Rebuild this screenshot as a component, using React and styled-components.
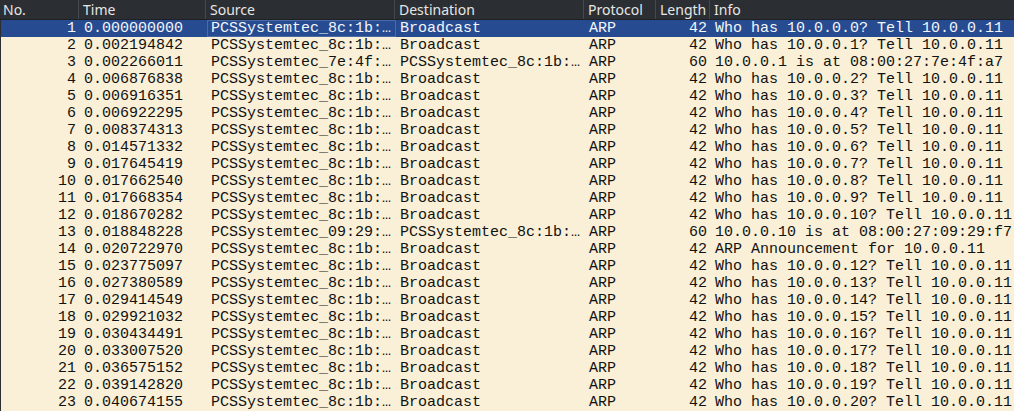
import styled, { createGlobalStyle } from "styled-components";

const GlobalStyle = createGlobalStyle`
	html, body {
		margin: 0;
		padding: 0;
		background: #faf0d7;
		overflow: hidden;
	}
`;

const A = "PCSSystemtec_8c:1b:…";

const packets = [
	[1, "0.000000000", A, "Broadcast", 42, "Who has 10.0.0.0? Tell 10.0.0.11"],
	[2, "0.002194842", A, "Broadcast", 42, "Who has 10.0.0.1? Tell 10.0.0.11"],
	[3, "0.002266011", "PCSSystemtec_7e:4f:…", A, 60, "10.0.0.1 is at 08:00:27:7e:4f:a7"],
	[4, "0.006876838", A, "Broadcast", 42, "Who has 10.0.0.2? Tell 10.0.0.11"],
	[5, "0.006916351", A, "Broadcast", 42, "Who has 10.0.0.3? Tell 10.0.0.11"],
	[6, "0.006922295", A, "Broadcast", 42, "Who has 10.0.0.4? Tell 10.0.0.11"],
	[7, "0.008374313", A, "Broadcast", 42, "Who has 10.0.0.5? Tell 10.0.0.11"],
	[8, "0.014571332", A, "Broadcast", 42, "Who has 10.0.0.6? Tell 10.0.0.11"],
	[9, "0.017645419", A, "Broadcast", 42, "Who has 10.0.0.7? Tell 10.0.0.11"],
	[10, "0.017662540", A, "Broadcast", 42, "Who has 10.0.0.8? Tell 10.0.0.11"],
	[11, "0.017668354", A, "Broadcast", 42, "Who has 10.0.0.9? Tell 10.0.0.11"],
	[12, "0.018670282", A, "Broadcast", 42, "Who has 10.0.0.10? Tell 10.0.0.11"],
	[13, "0.018848228", "PCSSystemtec_09:29:…", A, 60, "10.0.0.10 is at 08:00:27:09:29:f7"],
	[14, "0.020722970", A, "Broadcast", 42, "ARP Announcement for 10.0.0.11"],
	[15, "0.023775097", A, "Broadcast", 42, "Who has 10.0.0.12? Tell 10.0.0.11"],
	[16, "0.027380589", A, "Broadcast", 42, "Who has 10.0.0.13? Tell 10.0.0.11"],
	[17, "0.029414549", A, "Broadcast", 42, "Who has 10.0.0.14? Tell 10.0.0.11"],
	[18, "0.029921032", A, "Broadcast", 42, "Who has 10.0.0.15? Tell 10.0.0.11"],
	[19, "0.030434491", A, "Broadcast", 42, "Who has 10.0.0.16? Tell 10.0.0.11"],
	[20, "0.033007520", A, "Broadcast", 42, "Who has 10.0.0.17? Tell 10.0.0.11"],
	[21, "0.036575152", A, "Broadcast", 42, "Who has 10.0.0.18? Tell 10.0.0.11"],
	[22, "0.039142820", A, "Broadcast", 42, "Who has 10.0.0.19? Tell 10.0.0.11"],
	[23, "0.040674155", A, "Broadcast", 42, "Who has 10.0.0.20? Tell 10.0.0.11"],
];

const COLS = "79px 127px 189px 189px 72px 54px 1fr";

function App() {
	return (
		<>
			<GlobalStyle />
			<Table>
				<HeaderRow>
					<HeadCell $first>No.</HeadCell>
					<HeadCell>Time</HeadCell>
					<HeadCell>Source</HeadCell>
					<HeadCell>Destination</HeadCell>
					<HeadCell>Protocol</HeadCell>
					<HeadCell>Length</HeadCell>
					<HeadCell $last>Info</HeadCell>
				</HeaderRow>
				{packets.map((p, i) => (
					<Row key={p[0]} $selected={i === 0}>
						<Cell $right>{p[0]}</Cell>
						<Cell>{p[1]}</Cell>
						<Cell $focus={i === 0}>{p[2]}</Cell>
						<Cell>{p[3]}</Cell>
						<Cell>ARP</Cell>
						<Cell $right>{p[4]}</Cell>
						<Cell>{p[5]}</Cell>
					</Row>
				))}
			</Table>
		</>
	);
}

export default App;

const Table = styled.div`
	width: 1014px;
	height: 411px;
	display: flex;
	flex-direction: column;
	overflow: hidden;
	background: #faf0d7;
`;

const HeaderRow = styled.div`
	display: grid;
	grid-template-columns: ${COLS};
	height: 20px;
	background: #2b2e33;
	border-bottom: 1px solid #1e2024;
	box-sizing: border-box;
`;

const HeadCell = styled.div`
	font-family: "Noto Sans", "DejaVu Sans", sans-serif;
	font-size: 14px;
	line-height: 19px;
	color: #e6e6e6;
	padding-left: ${(p) => (p.$first ? "3px" : "4px")};
	border-right: ${(p) => (p.$last ? "none" : "1px solid #44484f")};
	white-space: nowrap;
	overflow: hidden;
`;

const Row = styled.div`
	display: grid;
	grid-template-columns: ${COLS};
	height: 17px;
	background: ${(p) => (p.$selected ? "#264b91" : "#faf0d7")};
	color: ${(p) => (p.$selected ? "#f4f6fa" : "#121212")};
	border-left: 1px solid #2b2e33;
	box-sizing: border-box;
`;

const Cell = styled.div`
	font-family: "Liberation Mono", "DejaVu Sans Mono", monospace;
	font-size: 15px;
	line-height: 17px;
	white-space: pre;
	overflow: hidden;
	text-align: ${(p) => (p.$right ? "right" : "left")};
	padding: ${(p) => (p.$right ? "0 4px 0 0" : "0 0 0 4px")};
	box-shadow: ${(p) => (p.$focus ? "inset 0 0 0 1px #4a6aa8" : "none")};
`;
